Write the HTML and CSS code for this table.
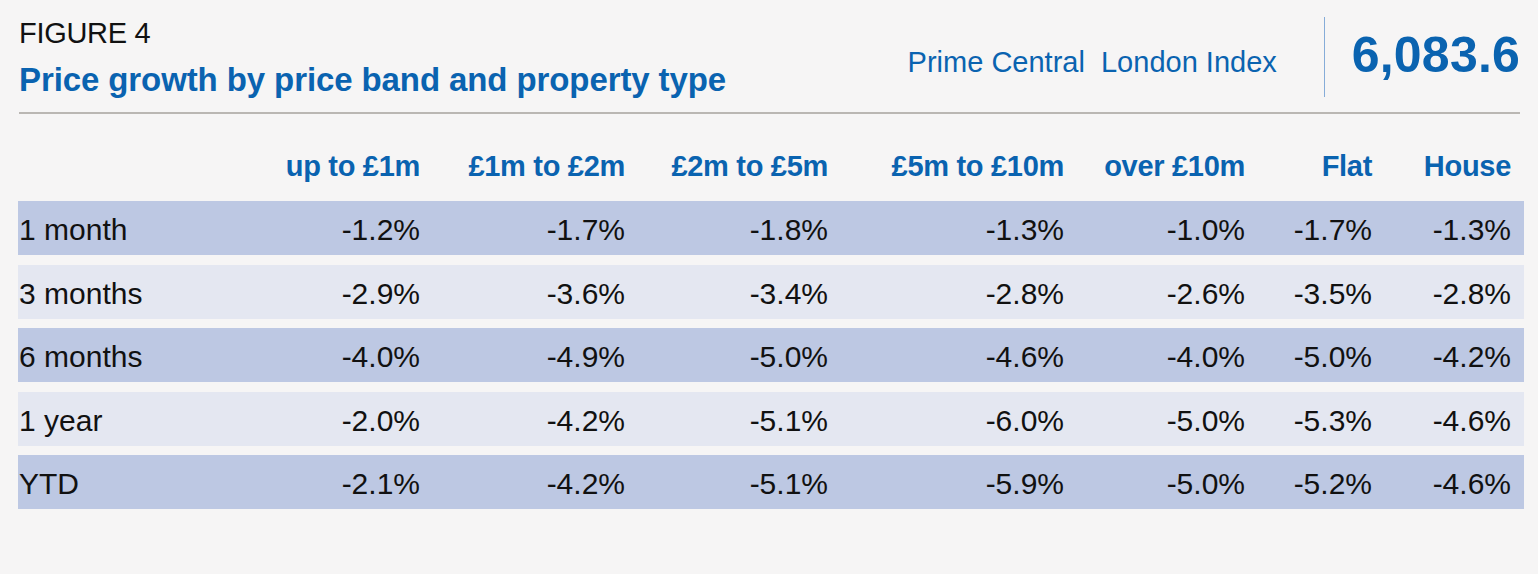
FILE: index.html
```html
<!DOCTYPE html>
<html lang="en">
<head>
<meta charset="utf-8">
<title>Figure 4 – Price growth by price band and property type</title>
<link rel="stylesheet" href="styles.css">
</head>
<body>
<div class="figure">
  <header class="fig-head">
    <div class="fig-titles">
      <div class="fig-label">FIGURE 4</div>
      <h1 class="fig-title">Price growth by price band and property type</h1>
    </div>
    <div class="fig-index">
      <div class="index-label">Prime Central&nbsp; London Index</div>
      <div class="index-value">6,083.6</div>
    </div>
  </header>
  <div class="rule"></div>

  <div class="table">
    <div class="row head">
      <div class="cell label"></div>
      <div class="cell">up to £1m</div>
      <div class="cell">£1m to £2m</div>
      <div class="cell">£2m to £5m</div>
      <div class="cell">£5m to £10m</div>
      <div class="cell">over £10m</div>
      <div class="cell">Flat</div>
      <div class="cell">House</div>
    </div>
    <div class="row dark">
      <div class="cell label">1 month</div>
      <div class="cell">-1.2%</div><div class="cell">-1.7%</div><div class="cell">-1.8%</div><div class="cell">-1.3%</div><div class="cell">-1.0%</div><div class="cell">-1.7%</div><div class="cell">-1.3%</div>
    </div>
    <div class="row light">
      <div class="cell label">3 months</div>
      <div class="cell">-2.9%</div><div class="cell">-3.6%</div><div class="cell">-3.4%</div><div class="cell">-2.8%</div><div class="cell">-2.6%</div><div class="cell">-3.5%</div><div class="cell">-2.8%</div>
    </div>
    <div class="row dark">
      <div class="cell label">6 months</div>
      <div class="cell">-4.0%</div><div class="cell">-4.9%</div><div class="cell">-5.0%</div><div class="cell">-4.6%</div><div class="cell">-4.0%</div><div class="cell">-5.0%</div><div class="cell">-4.2%</div>
    </div>
    <div class="row light">
      <div class="cell label">1 year</div>
      <div class="cell">-2.0%</div><div class="cell">-4.2%</div><div class="cell">-5.1%</div><div class="cell">-6.0%</div><div class="cell">-5.0%</div><div class="cell">-5.3%</div><div class="cell">-4.6%</div>
    </div>
    <div class="row dark">
      <div class="cell label">YTD</div>
      <div class="cell">-2.1%</div><div class="cell">-4.2%</div><div class="cell">-5.1%</div><div class="cell">-5.9%</div><div class="cell">-5.0%</div><div class="cell">-5.2%</div><div class="cell">-4.6%</div>
    </div>
  </div>
</div>
</body>
</html>
```
FILE: styles.css
```css
html, body {
  margin: 0;
  padding: 0;
  background: #f6f5f5;
}
body {
  font-family: "Liberation Sans", Arial, Helvetica, sans-serif;
  color: #111;
  width: 1538px;
  height: 574px;
  overflow: hidden;
}
.figure {
  padding: 16px 18px 0 19px;
}
.fig-head {
  display: flex;
  justify-content: space-between;
  align-items: flex-start;
  height: 96px;
}
.fig-label {
  font-size: 29px;
  line-height: 34px;
  color: #111;
  letter-spacing: -0.3px;
}
.fig-title {
  margin: 10px 0 0 0;
  font-size: 33px;
  line-height: 40px;
  font-weight: bold;
  color: #0a63b0;
  letter-spacing: -0.1px;
}
.fig-index {
  display: flex;
  align-items: baseline;
  margin-top: 1px;
}
.index-label {
  font-size: 29px;
  line-height: 34px;
  color: #0a63b0;
  margin-right: 47px;
  letter-spacing: 0;
}
.index-value {
  height: 80px;
  line-height: 77px;
  border-left: 1px solid #86acd8;
  padding-left: 27px;
  font-size: 50px;
  font-weight: bold;
  color: #0a63b0;
  letter-spacing: 0.2px;
}
.rule {
  height: 2px;
  background: #bab7b3;
}
.table {
  margin: 32px 0 0 -1px;
  width: 1506px;
  display: flex;
  flex-direction: column;
  gap: 9.5px;
}
.row {
  display: grid;
  grid-template-columns: 200px 202px 205px 203px 236px 181px 127px 139px;
  padding-right: 13px;
}
.row.head {
  height: 40px;
  line-height: 40px;
  font-size: 29px;
  font-weight: bold;
  color: #0a63b0;
  margin-bottom: 5.5px;
  letter-spacing: -0.3px;
}
.row.dark,
.row.light {
  height: 54px;
  box-sizing: border-box;
  padding-top: 3px;
  line-height: 51px;
  font-size: 30px;
}
.row.dark {
  background: #bdc8e3;
}
.row.light {
  background: #e4e7f1;
}
.cell {
  text-align: right;
  white-space: nowrap;
}
.cell.label {
  text-align: left;
  padding-left: 1px;
}
```
